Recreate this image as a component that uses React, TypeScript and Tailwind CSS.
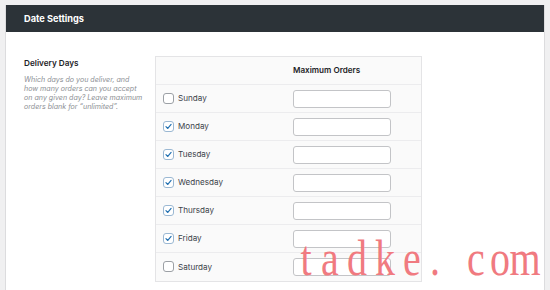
import React from "react";

const DAYS = [
  { name: "Sunday", on: false },
  { name: "Monday", on: true },
  { name: "Tuesday", on: true },
  { name: "Wednesday", on: true },
  { name: "Thursday", on: true },
  { name: "Friday", on: true },
  { name: "Saturday", on: false },
];

// watermark glyphs, centre x of each letter
const MARK = [
  { c: "t", x: 306 },
  { c: "a", x: 330 },
  { c: "d", x: 357 },
  { c: "k", x: 385 },
  { c: "e", x: 412 },
  { c: ".", x: 435 },
  { c: "c", x: 476 },
  { c: "o", x: 500 },
  { c: "m", x: 525 },
];

function Check({ on }: { on: boolean }) {
  return (
    <span
      className={`flex h-[11px] w-[11px] items-center justify-center rounded-[3px] border bg-white ${
        on ? "border-[#9bb8d3]" : "border-[#9ca0a5]"
      }`}
    >
      {on && (
        <svg width="9" height="9" viewBox="0 0 10 10" fill="none">
          <path d="M2.2 5.2 L4.2 7.2 L7.9 2.6" stroke="#2271b1" strokeWidth="1.3" strokeLinecap="round" strokeLinejoin="round" />
        </svg>
      )}
    </span>
  );
}

export default function App() {
  return (
    <div
      className="relative h-[290px] w-[550px] overflow-hidden bg-[#f0f0f1] pl-[5px] pt-[5px]"
      style={{ fontFamily: "Inter, 'Liberation Sans', sans-serif" }}
    >
      <div className="h-[300px] w-[540px] border-x border-[#dcdcde] bg-white">
        {/* Header */}
        <div className="flex h-[27px] items-center bg-[#2c3338] px-[18px] text-[9.2px] font-bold text-white">
          Date Settings
        </div>

        <div className="flex pl-[18px] pt-[24px]">
          {/* Label column */}
          <div className="w-[131px] pt-[1px]">
            <p className="text-[8.2px] font-semibold text-[#1d2327]">Delivery Days</p>
            <p className="mt-[6px] text-[7.1px] italic leading-[9px] text-[#8c8f94]">
              Which days do you deliver, and
              <br />
              how many orders can you accept
              <br />
              on any given day? Leave maximum
              <br />
              orders blank for “unlimited”.
            </p>
          </div>

          {/* Table */}
          <div className="w-[267px] border border-[#e4e4e6] bg-[#fafafa]">
            <div className="flex h-[28px] items-center border-b border-[#ececee]">
              <div className="w-[137px]" />
              <span className="text-[8.1px] font-semibold text-[#1d2327]">Maximum Orders</span>
            </div>
            {DAYS.map((d, i) => (
              <div
                key={d.name}
                className={`flex h-[28px] items-center ${i < DAYS.length - 1 ? "border-b border-[#ececee]" : ""}`}
              >
                <div className="flex w-[137px] items-center gap-[4px] pl-[7px]">
                  <Check on={d.on} />
                  <span className="text-[8.1px] text-[#3c434a]">{d.name}</span>
                </div>
                <div className="h-[18px] w-[98px] rounded-[3px] border border-[#c3c4c7] bg-white" />
              </div>
            ))}
          </div>
        </div>
      </div>

      {/* Watermark */}
      {MARK.map((m) => (
        <span
          key={m.x}
          className="pointer-events-none absolute top-[233px] -translate-x-1/2 scale-x-[0.8] text-[50px] leading-none text-[#f07a80]"
          style={{ left: m.x, fontFamily: "'Liberation Serif', serif" }}
        >
          {m.c}
        </span>
      ))}
    </div>
  );
}
